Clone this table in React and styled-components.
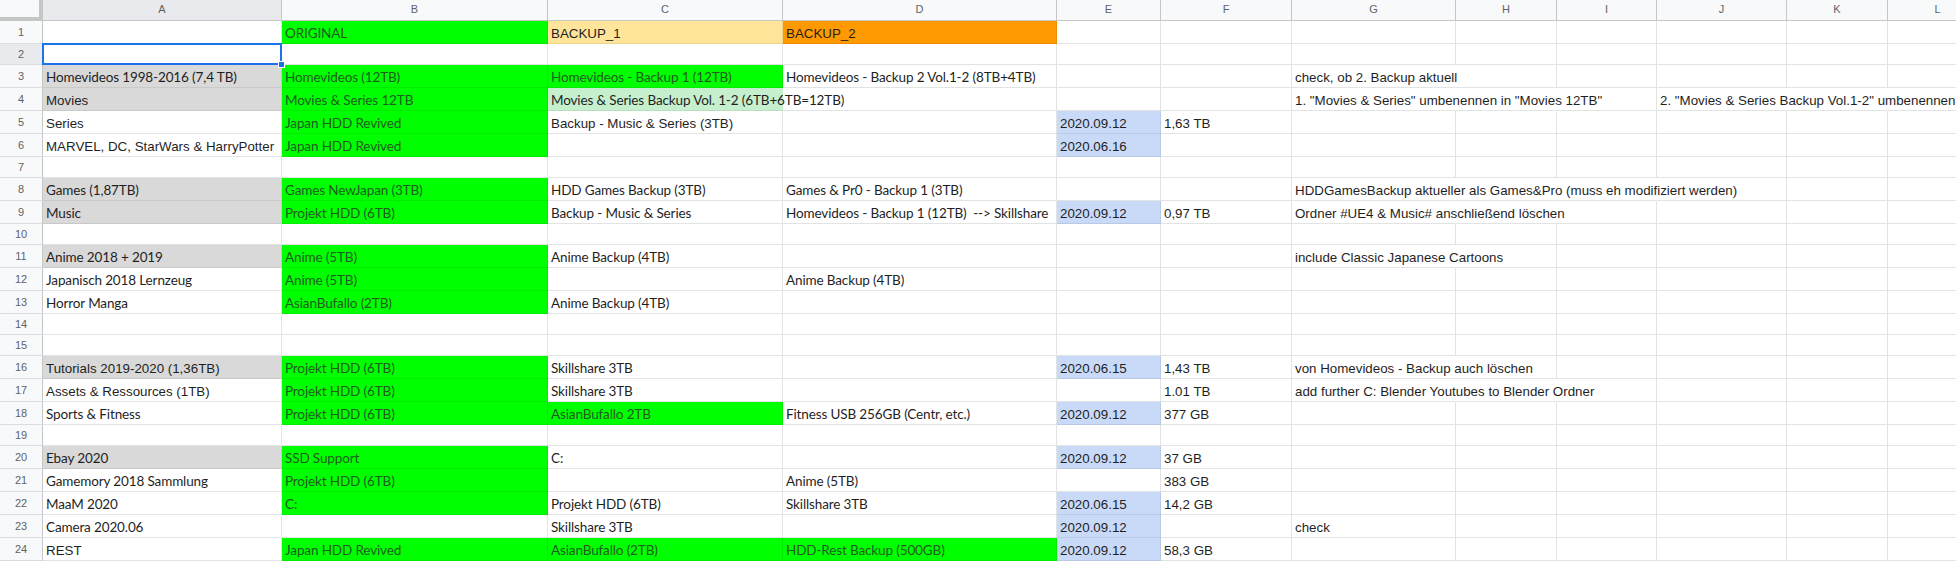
import React from 'react';
import styled, { createGlobalStyle } from 'styled-components';

const Global = createGlobalStyle`
  html, body { margin: 0; padding: 0; background: #fff; overflow: hidden; }
  #root { width: 1956px; height: 561px; }
`;

const WIDTHS = [43, 239, 266, 235, 274, 104, 131, 164, 101, 100, 130, 101, 100];
const LETTERS = ['A', 'B', 'C', 'D', 'E', 'F', 'G', 'H', 'I', 'J', 'K', 'L'];
const TEMPLATE = WIDTHS.map((w) => `${w}px`).join(' ');

const GREEN = '#00ff00';
const GRAY = '#d9d9d9';
const BLUE = '#c9daf8';
const MINT = '#c6efce';
const PEACH = '#ffe599';
const ORANGE = '#ff9900';

const FONTS = {
  a: { font: `13.33px "Liberation Sans", Arial, sans-serif`, ls: '0px' },
  c: { font: `13.5px Lato, "Open Sans", sans-serif`, ls: '-0.13px' },
};

const Sheet = styled.div`
  width: 1956px;
  height: 561px;
  overflow: hidden;
  background: #fff;
`;

const Row = styled.div`
  display: grid;
  grid-template-columns: ${TEMPLATE};
  height: ${(p) => p.$h}px;
`;

const Corner = styled.div`
  box-sizing: border-box;
  background: #f8f9fa;
  border-right: 4px solid #c4c7c5;
  border-bottom: 4px solid #c4c7c5;
`;

const ColHead = styled.div`
  box-sizing: border-box;
  background: ${(p) => (p.$active ? '#e8eaed' : '#f8f9fa')};
  border-right: 1px solid #c4c7c5;
  border-bottom: 1px solid #c4c7c5;
  display: flex;
  align-items: center;
  justify-content: center;
  padding-bottom: 2px;
  font: 11px "Liberation Sans", Arial, sans-serif;
  color: #5f6368;
`;

const RowHead = styled.div`
  box-sizing: border-box;
  background: ${(p) => (p.$active ? '#e8eaed' : '#f8f9fa')};
  border-right: 1px solid #c4c7c5;
  border-bottom: 1px solid #dadce0;
  display: flex;
  align-items: center;
  justify-content: center;
  padding-bottom: 1px;
  font: 11px "Liberation Sans", Arial, sans-serif;
  color: #5f6368;
`;

const Cell = styled.div`
  box-sizing: border-box;
  min-width: 0;
  background: ${(p) => p.$bg || '#fff'};
  border-right: 1px solid
    ${(p) => (p.$open ? 'transparent' : p.$bg ? 'rgba(0,0,0,0.07)' : '#e2e3e3')};
  border-bottom: 1px solid ${(p) => (p.$bg ? 'rgba(0,0,0,0.07)' : '#e2e3e3')};
  display: flex;
  align-items: flex-end;
  padding: 0 3px 2px;
  white-space: pre;
  overflow: visible;
`;

const Selected = styled(Cell)`
  position: relative;
  &::after {
    content: '';
    position: absolute;
    left: -1px;
    top: -1px;
    right: -1px;
    bottom: -1px;
    border: 2px solid #1a73e8;
    z-index: 2;
  }
  &::before {
    content: '';
    position: absolute;
    right: -4px;
    bottom: -4px;
    width: 5px;
    height: 5px;
    background: #1a73e8;
    border: 1px solid #fff;
    z-index: 3;
  }
`;

const Text = styled.span`
  position: relative;
  z-index: 1;
  line-height: 17px;
  font: ${(p) => FONTS[p.$f].font};
  letter-spacing: ${(p) => FONTS[p.$f].ls};
  color: ${(p) => (p.$green ? '#1f5c1f' : '#1f1f1f')};
`;

const c = (t, bg, span = 1) => ({ t, f: 'c', bg, span });
const a = (t, bg, span = 1) => ({ t, f: 'a', bg, span });

const ROWS = [
  { n: 1, cells: { B: c('ORIGINAL', GREEN), C: a('BACKUP_1', PEACH), D: a('BACKUP_2', ORANGE) } },
  { n: 2, empty: true },
  {
    n: 3,
    cells: {
      A: c('Homevideos 1998-2016 (7,4 TB)', GRAY),
      B: c('Homevideos (12TB)', GREEN),
      C: c('Homevideos - Backup 1 (12TB)', GREEN),
      D: c('Homevideos - Backup 2 Vol.1-2 (8TB+4TB)'),
      G: a('check, ob 2. Backup aktuell', null, 2),
    },
  },
  {
    n: 4,
    cells: {
      A: a('Movies', GRAY),
      B: c('Movies & Series 12TB', GREEN),
      C: c('Movies & Series Backup Vol. 1-2 (6TB+6TB=12TB)', MINT, 2),
      G: a('1. "Movies & Series" umbenennen in "Movies 12TB"', null, 3),
      J: a('2. "Movies & Series Backup Vol.1-2" umbenennen', null, 3),
    },
  },
  {
    n: 5,
    cells: {
      A: a('Series'),
      B: c('Japan HDD Revived', GREEN),
      C: a('Backup - Music & Series (3TB)'),
      E: a('2020.09.12', BLUE),
      F: a('1,63 TB'),
    },
  },
  {
    n: 6,
    cells: {
      A: a('MARVEL, DC, StarWars & HarryPotter'),
      B: c('Japan HDD Revived', GREEN),
      E: a('2020.06.16', BLUE),
    },
  },
  { n: 7, empty: true },
  {
    n: 8,
    cells: {
      A: c('Games (1,87TB)', GRAY),
      B: c('Games NewJapan (3TB)', GREEN),
      C: c('HDD Games Backup (3TB)'),
      D: c('Games & Pr0 - Backup 1 (3TB)'),
      G: a('HDDGamesBackup aktueller als Games&Pro (muss eh modifiziert werden)', null, 4),
    },
  },
  {
    n: 9,
    cells: {
      A: c('Music', GRAY),
      B: c('Projekt HDD (6TB)', GREEN),
      C: c('Backup - Music & Series'),
      D: c('Homevideos - Backup 1 (12TB)  --> Skillshare'),
      E: a('2020.09.12', BLUE),
      F: a('0,97 TB'),
      G: a('Ordner #UE4 & Music# anschließend löschen', null, 3),
    },
  },
  { n: 10, empty: true },
  {
    n: 11,
    cells: {
      A: c('Anime 2018 + 2019', GRAY),
      B: c('Anime (5TB)', GREEN),
      C: c('Anime Backup (4TB)'),
      G: a('include Classic Japanese Cartoons', null, 2),
    },
  },
  {
    n: 12,
    cells: {
      A: c('Japanisch 2018 Lernzeug'),
      B: c('Anime (5TB)', GREEN),
      D: c('Anime Backup (4TB)'),
    },
  },
  {
    n: 13,
    cells: {
      A: c('Horror Manga'),
      B: c('AsianBufallo (2TB)', GREEN),
      C: c('Anime Backup (4TB)'),
    },
  },
  { n: 14, empty: true },
  { n: 15, empty: true },
  {
    n: 16,
    cells: {
      A: a('Tutorials 2019-2020 (1,36TB)', GRAY),
      B: c('Projekt HDD (6TB)', GREEN),
      C: c('Skillshare 3TB'),
      E: a('2020.06.15', BLUE),
      F: a('1,43 TB'),
      G: a('von Homevideos - Backup auch löschen', null, 2),
    },
  },
  {
    n: 17,
    cells: {
      A: a('Assets & Ressources (1TB)'),
      B: c('Projekt HDD (6TB)', GREEN),
      C: c('Skillshare 3TB'),
      F: a('1.01 TB'),
      G: a('add further C: Blender Youtubes to Blender Ordner', null, 3),
    },
  },
  {
    n: 18,
    cells: {
      A: c('Sports & Fitness'),
      B: c('Projekt HDD (6TB)', GREEN),
      C: c('AsianBufallo 2TB', GREEN),
      D: c('Fitness USB 256GB (Centr, etc.)'),
      E: a('2020.09.12', BLUE),
      F: a('377 GB'),
    },
  },
  { n: 19, empty: true },
  {
    n: 20,
    cells: {
      A: c('Ebay 2020', GRAY),
      B: c('SSD Support', GREEN),
      C: c('C:'),
      E: a('2020.09.12', BLUE),
      F: a('37 GB'),
    },
  },
  {
    n: 21,
    cells: {
      A: c('Gamemory 2018 Sammlung'),
      B: c('Projekt HDD (6TB)', GREEN),
      D: c('Anime (5TB)'),
      F: a('383 GB'),
    },
  },
  {
    n: 22,
    cells: {
      A: c('MaaM 2020'),
      B: c('C:', GREEN),
      C: c('Projekt HDD (6TB)'),
      D: c('Skillshare 3TB'),
      E: a('2020.06.15', BLUE),
      F: a('14,2 GB'),
    },
  },
  {
    n: 23,
    cells: {
      A: c('Camera 2020.06'),
      C: c('Skillshare 3TB'),
      E: a('2020.09.12', BLUE),
      G: a('check'),
    },
  },
  {
    n: 24,
    cells: {
      A: a('REST'),
      B: c('Japan HDD Revived', GREEN),
      C: c('AsianBufallo (2TB)', GREEN),
      D: c('HDD-Rest Backup (500GB)', GREEN),
      E: a('2020.09.12', BLUE),
      F: a('58,3 GB'),
    },
  },
];

const SELECTED = { row: 2, col: 'A' };

function SheetRow({ row }) {
  const cells = row.cells || {};
  const open = new Set();
  LETTERS.forEach((L, i) => {
    const s = cells[L];
    if (s && s.span > 1) {
      for (let k = 0; k < s.span - 1; k++) open.add(LETTERS[i + k]);
    }
  });
  return (
    <Row $h={row.empty ? 21 : 23}>
      <RowHead $active={row.n === SELECTED.row}>{row.n}</RowHead>
      {LETTERS.map((L) => {
        const s = cells[L];
        const isSel = row.n === SELECTED.row && L === SELECTED.col;
        const Comp = isSel ? Selected : Cell;
        return (
          <Comp key={L} $bg={s && s.bg} $open={open.has(L)}>
            {s && (
              <Text $f={s.f} $green={s.bg === GREEN}>
                {s.t}
              </Text>
            )}
          </Comp>
        );
      })}
    </Row>
  );
}

export default function App() {
  return (
    <>
      <Global />
      <Sheet>
        <Row $h={21}>
          <Corner />
          {LETTERS.map((L) => (
            <ColHead key={L} $active={L === SELECTED.col}>
              {L}
            </ColHead>
          ))}
        </Row>
        {ROWS.map((r) => (
          <SheetRow key={r.n} row={r} />
        ))}
      </Sheet>
    </>
  );
}
